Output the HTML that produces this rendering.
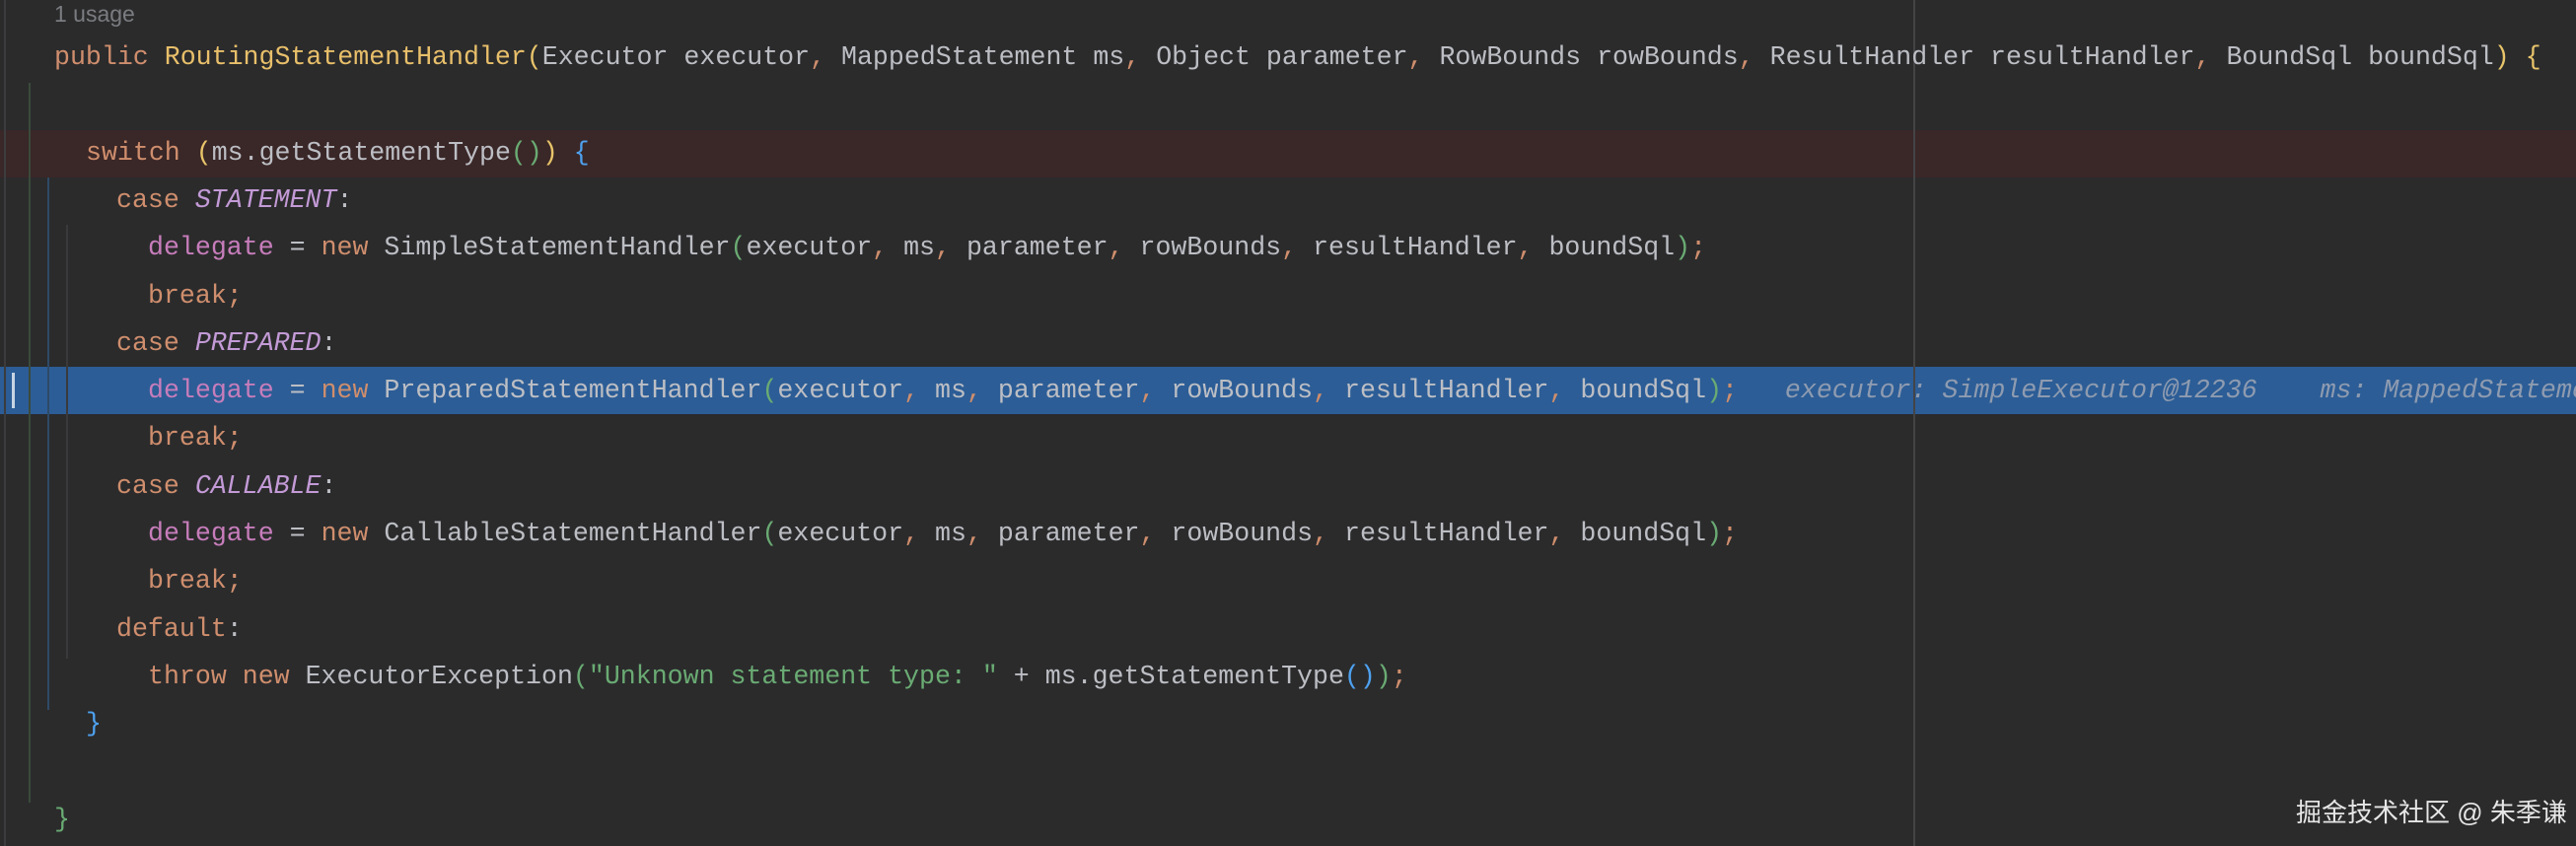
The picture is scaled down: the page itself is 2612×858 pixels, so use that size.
<!DOCTYPE html>
<html><head><meta charset="utf-8"><style>
html,body{margin:0;padding:0;width:2612px;height:858px;overflow:hidden;}
body{background:#2b2b2c;position:relative;font-family:"Liberation Mono",monospace;}
#w{position:absolute;left:0;top:0;width:2612px;height:858px;overflow:hidden;}
.l{position:absolute;right:0;height:48px;line-height:48px;white-space:pre;font-size:26.6px;color:#bcbec4;overflow:hidden;}
.k{color:#cf8e6d}.m{color:#e8bf6a}.f{color:#c77dbb}.c{color:#c39ad6;font-style:italic}.s{color:#6aab73}
.y{color:#e8c46a}.g{color:#6aab73}.b{color:#4ea1ef}
.h{color:#8e9bb0;font-style:italic}
.v{position:absolute;width:2px;}
</style></head><body><div id="w">
<div style="position:absolute;left:0;top:132px;width:2612px;height:48px;background:#3a2727"></div>
<div style="position:absolute;left:0;top:372px;width:2612px;height:48px;background:#2c5d96"></div>
<div class="v" style="left:4px;top:0;height:858px;background:#3c3c3e"></div>
<div class="v" style="left:29px;top:84px;height:730px;background:#3b4a3b"></div>
<div class="v" style="left:48px;top:180px;height:540px;background:#2f4a66"></div>
<div class="v" style="left:67px;top:228px;height:440px;background:#3a3a3c"></div>
<div class="v" style="left:1940px;top:0;height:858px;background:#444446"></div>
<div class="v" style="left:12px;top:378px;height:36px;width:3px;background:#c8d4e4"></div>
<div class="l" style="top:-10px;left:55px;font-family:'Liberation Sans',sans-serif;font-size:23px;color:#7a7c80">1 usage</div>
<div class="l" style="top:34px;left:55px"><span class="k">public</span> <span class="m">RoutingStatementHandler</span><span class="y">(</span>Executor executor<span class="k">,</span> MappedStatement ms<span class="k">,</span> Object parameter<span class="k">,</span> RowBounds rowBounds<span class="k">,</span> ResultHandler resultHandler<span class="k">,</span> BoundSql boundSql<span class="y">)</span> <span class="y">{</span></div>
<div class="l" style="top:131px;left:87px"><span class="k">switch</span> <span class="y">(</span>ms.getStatementType<span class="g">()</span><span class="y">)</span> <span class="b">{</span></div>
<div class="l" style="top:179px;left:118px"><span class="k">case</span> <span class="c">STATEMENT</span>:</div>
<div class="l" style="top:227px;left:150px"><span class="f">delegate</span> = <span class="k">new</span> SimpleStatementHandler<span class="g">(</span>executor<span class="k">,</span> ms<span class="k">,</span> parameter<span class="k">,</span> rowBounds<span class="k">,</span> resultHandler<span class="k">,</span> boundSql<span class="g">)</span><span class="k">;</span></div>
<div class="l" style="top:276px;left:150px"><span class="k">break;</span></div>
<div class="l" style="top:324px;left:118px"><span class="k">case</span> <span class="c">PREPARED</span>:</div>
<div class="l" style="top:372px;left:150px"><span class="f">delegate</span> = <span class="k">new</span> PreparedStatementHandler<span class="g">(</span>executor<span class="k">,</span> ms<span class="k">,</span> parameter<span class="k">,</span> rowBounds<span class="k">,</span> resultHandler<span class="k">,</span> boundSql<span class="g">)</span><span class="k">;</span>   <span class="h">executor: SimpleExecutor@12236    ms: MappedStateme</span></div>
<div class="l" style="top:420px;left:150px"><span class="k">break;</span></div>
<div class="l" style="top:469px;left:118px"><span class="k">case</span> <span class="c">CALLABLE</span>:</div>
<div class="l" style="top:517px;left:150px"><span class="f">delegate</span> = <span class="k">new</span> CallableStatementHandler<span class="g">(</span>executor<span class="k">,</span> ms<span class="k">,</span> parameter<span class="k">,</span> rowBounds<span class="k">,</span> resultHandler<span class="k">,</span> boundSql<span class="g">)</span><span class="k">;</span></div>
<div class="l" style="top:565px;left:150px"><span class="k">break;</span></div>
<div class="l" style="top:614px;left:118px"><span class="k">default</span>:</div>
<div class="l" style="top:662px;left:150px"><span class="k">throw new</span> ExecutorException<span class="g">(</span><span class="s">"Unknown statement type: "</span> + ms.getStatementType<span class="b">()</span><span class="g">)</span><span class="k">;</span></div>
<div class="l" style="top:710px;left:87px"><span class="b">}</span></div>
<div class="l" style="top:807px;left:55px"><span class="g">}</span></div>
<div style="position:absolute;left:2328px;top:804px;font-family:'Liberation Sans','Noto Sans CJK SC',sans-serif;font-size:26px;color:#e6e6e6;white-space:pre">掘金技术社区 @ 朱季谦</div>
</div></body></html>
